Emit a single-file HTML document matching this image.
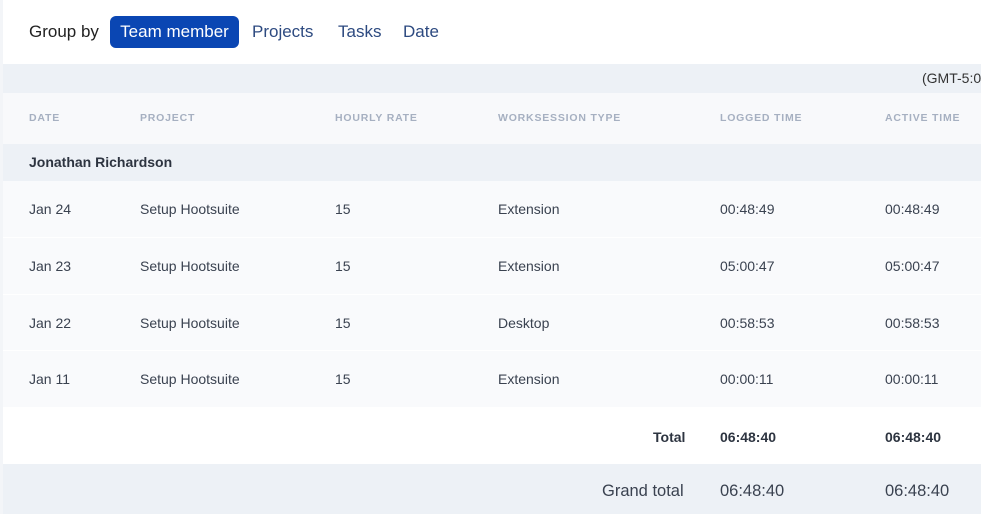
<!DOCTYPE html>
<html><head><meta charset="utf-8"><style>
*{margin:0;padding:0;box-sizing:border-box}
body{width:981px;height:514px;overflow:hidden;background:#f3f5f8;font-family:"Liberation Sans",sans-serif;color:#2d3748;position:relative}
.card{position:absolute;left:3px;top:0;width:978px;height:514px;background:#fff}
.abs{position:absolute;white-space:nowrap}
.band{position:absolute;left:3px;width:978px}
.t{position:absolute;font-size:14px;color:#3a4250}
.h{position:absolute;font-size:10.5px;font-weight:bold;letter-spacing:0.8px;color:#a6b0c1}
</style></head><body>
<div class="card"></div>
<div class="abs" style="left:29px;top:22px;font-size:17px;color:#222">Group by</div>
<div class="abs" style="left:110px;top:16px;width:129px;height:32px;background:#0a46b3;border-radius:6px;color:#fff;font-size:17px;line-height:32px;text-align:center">Team member</div>
<div class="abs" style="left:252px;top:22px;font-size:17px;color:#2d4a80">Projects</div>
<div class="abs" style="left:338px;top:22px;font-size:17px;color:#2d4a80">Tasks</div>
<div class="abs" style="left:403px;top:22px;font-size:17px;color:#2d4a80">Date</div>

<div class="band" style="top:64px;height:29px;background:#edf1f6"></div>
<div class="abs" style="left:922px;top:70px;font-size:14px;color:#333">(GMT-5:00</div>
<div class="band" style="top:93px;height:51px;background:#f8f9fb"></div>
<div class="h" style="left:29px;top:112px">DATE</div>
<div class="h" style="left:140px;top:112px">PROJECT</div>
<div class="h" style="left:335px;top:112px">HOURLY RATE</div>
<div class="h" style="left:498px;top:112px">WORKSESSION TYPE</div>
<div class="h" style="left:720px;top:112px">LOGGED TIME</div>
<div class="h" style="left:885px;top:112px">ACTIVE TIME</div>
<div class="band" style="top:144px;height:37px;background:#edf1f6"></div>
<div class="abs" style="left:29px;top:154px;font-size:14px;font-weight:bold;color:#2d3440">Jonathan Richardson</div>

<div class="band" style="top:181px;height:56px;background:#f9fafc"></div>
<div class="band" style="top:238px;height:56px;background:#f9fafc"></div>
<div class="band" style="top:295px;height:55px;background:#f9fafc"></div>
<div class="band" style="top:351px;height:56px;background:#f9fafc"></div>

<div class="t" style="left:29px;top:201px">Jan 24</div><div class="t" style="left:140px;top:201px">Setup Hootsuite</div><div class="t" style="left:335px;top:201px">15</div><div class="t" style="left:498px;top:201px">Extension</div><div class="t" style="left:720px;top:201px">00:48:49</div><div class="t" style="left:885px;top:201px">00:48:49</div>
<div class="t" style="left:29px;top:258px">Jan 23</div><div class="t" style="left:140px;top:258px">Setup Hootsuite</div><div class="t" style="left:335px;top:258px">15</div><div class="t" style="left:498px;top:258px">Extension</div><div class="t" style="left:720px;top:258px">05:00:47</div><div class="t" style="left:885px;top:258px">05:00:47</div>
<div class="t" style="left:29px;top:315px">Jan 22</div><div class="t" style="left:140px;top:315px">Setup Hootsuite</div><div class="t" style="left:335px;top:315px">15</div><div class="t" style="left:498px;top:315px">Desktop</div><div class="t" style="left:720px;top:315px">00:58:53</div><div class="t" style="left:885px;top:315px">00:58:53</div>
<div class="t" style="left:29px;top:371px">Jan 11</div><div class="t" style="left:140px;top:371px">Setup Hootsuite</div><div class="t" style="left:335px;top:371px">15</div><div class="t" style="left:498px;top:371px">Extension</div><div class="t" style="left:720px;top:371px">00:00:11</div><div class="t" style="left:885px;top:371px">00:00:11</div>

<div class="t" style="left:653px;top:429px;font-weight:bold;color:#2d3440">Total</div>
<div class="t" style="left:720px;top:429px;font-weight:bold;color:#2d3440">06:48:40</div>
<div class="t" style="left:885px;top:429px;font-weight:bold;color:#2d3440">06:48:40</div>

<div class="band" style="top:464px;height:50px;background:#edf1f6"></div>
<div class="abs" style="left:602px;top:482px;font-size:16.5px;color:#3a4250">Grand total</div>
<div class="abs" style="left:720px;top:482px;font-size:16.5px;color:#3a4250">06:48:40</div>
<div class="abs" style="left:885px;top:482px;font-size:16.5px;color:#3a4250">06:48:40</div>
</body></html>
